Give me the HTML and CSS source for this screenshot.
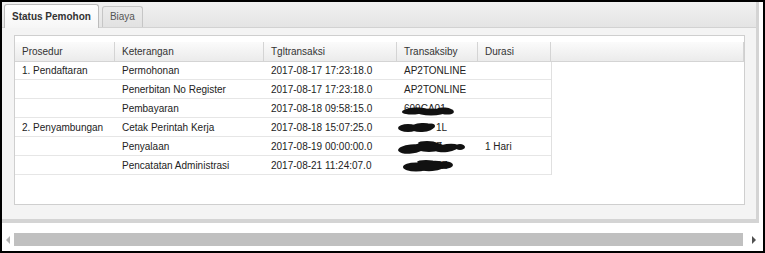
FILE: index.html
```html
<!DOCTYPE html>
<html lang="en">
<head>
    <meta charset="UTF-8">
    <title>Status Pemohon</title>
    <link rel="stylesheet" href="styles.css">
</head>
<body>
    <div class="window">
        <div class="tabpanel">
            <div class="tabstrip">
                <div class="tab active">Status Pemohon</div>
                <div class="tab">Biaya</div>
            </div>
            <div class="tabbody">
                <div class="grid">
                    <div class="grid-head">
                        <div class="hcell">Prosedur</div>
                        <div class="hcell">Keterangan</div>
                        <div class="hcell">Tgltransaksi</div>
                        <div class="hcell">Transaksiby</div>
                        <div class="hcell">Durasi</div>
                        <div class="hcell last"></div>
                    </div>
                    <div class="grid-body">
                        <div class="row">
                            <div class="cell">1. Pendaftaran</div>
                            <div class="cell">Permohonan</div>
                            <div class="cell">2017-08-17 17:23:18.0</div>
                            <div class="cell">AP2TONLINE</div>
                            <div class="cell"></div>
                        </div>
                        <div class="row">
                            <div class="cell"></div>
                            <div class="cell">Penerbitan No Register</div>
                            <div class="cell">2017-08-17 17:23:18.0</div>
                            <div class="cell">AP2TONLINE</div>
                            <div class="cell"></div>
                        </div>
                        <div class="row">
                            <div class="cell"></div>
                            <div class="cell">Pembayaran</div>
                            <div class="cell">2017-08-18 09:58:15.0</div>
                            <div class="cell redacted first">609CA01
                                <svg class="blob b1" width="54" height="12" viewBox="0 0 54 12">
                                    <g fill="#111">
                                        <ellipse cx="14" cy="7" rx="13" ry="3.5" transform="rotate(-4 14 7)"/>
                                        <ellipse cx="30" cy="8" rx="14" ry="3.5"/>
                                        <ellipse cx="44" cy="7" rx="9" ry="3.5" transform="rotate(6 44 7)"/>
                                    </g>
                                </svg>
                            </div>
                            <div class="cell"></div>
                        </div>
                        <div class="row">
                            <div class="cell">2. Penyambungan</div>
                            <div class="cell">Cetak Perintah Kerja</div>
                            <div class="cell">2017-08-18 15:07:25.0</div>
                            <div class="cell redacted">1L
                                <svg class="blob b2" width="40" height="11" viewBox="0 0 40 11">
                                    <g fill="#111">
                                        <ellipse cx="11" cy="6" rx="10" ry="4"/>
                                        <ellipse cx="25" cy="5.5" rx="12" ry="4.5" transform="rotate(-3 25 5.5)"/>
                                        <ellipse cx="34" cy="4" rx="4" ry="2.5"/>
                                    </g>
                                </svg>
                            </div>
                            <div class="cell">&nbsp;</div>
                        </div>
                        <div class="row">
                            <div class="cell"></div>
                            <div class="cell">Penyalaan</div>
                            <div class="cell">2017-08-19 00:00:00.0</div>
                            <div class="cell redacted">Z
                                <svg class="blob b3" width="70" height="15" viewBox="0 0 70 15">
                                    <g fill="#111">
                                        <ellipse cx="14" cy="9" rx="13" ry="4.5" transform="rotate(-6 14 9)"/>
                                        <ellipse cx="32" cy="7" rx="15" ry="5"/>
                                        <ellipse cx="50" cy="8" rx="12" ry="4" transform="rotate(-8 50 8)"/>
                                        <ellipse cx="63" cy="7" rx="5" ry="3"/>
                                        <ellipse cx="30" cy="3" rx="9" ry="2"/>
                                    </g>
                                </svg>
                            </div>
                            <div class="cell">1 Hari</div>
                        </div>
                        <div class="row">
                            <div class="cell"></div>
                            <div class="cell">Pencatatan Administrasi</div>
                            <div class="cell">2017-08-21 11:24:07.0</div>
                            <div class="cell redacted">4Z
                                <svg class="blob b4" width="52" height="14" viewBox="0 0 52 14">
                                    <g fill="#111">
                                        <ellipse cx="14" cy="8" rx="13" ry="4.5"/>
                                        <ellipse cx="30" cy="7" rx="14" ry="5" transform="rotate(-5 30 7)"/>
                                        <ellipse cx="44" cy="6" rx="7" ry="3.5"/>
                                        <ellipse cx="24" cy="3" rx="9" ry="2"/>
                                    </g>
                                </svg>
                            </div>
                            <div class="cell"></div>
                        </div>
                    </div>
                </div>
            </div>
        </div>
        <div class="hscroll">
            <span class="arrow left"></span>
            <div class="track"></div>
            <span class="arrow right"></span>
        </div>
    </div>
</body>
</html>
```

FILE: styles.css
```css
body {
    margin: 0;
    font-family: "Liberation Sans", Arial, sans-serif;
    font-size: 10px;
    color: #222;
    background: #fff;
}
.window {
    width: 765px;
    height: 253px;
    box-sizing: border-box;
    border: 2px solid #000;
    background: #fff;
    display: flex;
    flex-direction: column;
}
.tabpanel {
    width: 757px;
    height: 221px;
    box-sizing: border-box;
    border-right: 3px solid #d4d4d4;
    border-bottom: 4px solid #d4d4d4;
    display: flex;
    flex-direction: column;
}
.tabstrip {
    height: 26px;
    box-sizing: border-box;
    padding: 3px 0 0 2px;
    display: flex;
    align-items: flex-end;
    gap: 3px;
    background: linear-gradient(#f1f1f1, #e4e4e4);
    border-bottom: 1px solid #d2d2d2;
}
.tab {
    height: 21px;
    box-sizing: border-box;
    padding: 0 7px;
    line-height: 20px;
    border: 1px solid #c6c6c6;
    border-bottom: none;
    border-radius: 3px 3px 0 0;
    background: linear-gradient(#ececec, #e2e2e2);
    color: #555;
}
.tab.active {
    height: 24px;
    margin-bottom: -1px;
    line-height: 23px;
    border-color: #bcbcbc;
    background: linear-gradient(#ffffff, #f6f6f6);
    color: #333;
    font-weight: bold;
}
.tabbody {
    flex: 1;
    background: #f4f4f4;
    padding: 7px 11px 11px 12px;
}
.grid {
    height: 170px;
    box-sizing: border-box;
    border: 1px solid #cfcfcf;
    background: #fff;
    padding-top: 6px;
}
.grid-head {
    display: grid;
    grid-template-columns: 100px 149px 133px 81px 73px 1fr;
    height: 19px;
}
.hcell {
    box-sizing: border-box;
    padding-left: 7px;
    line-height: 19px;
    color: #333;
    background: linear-gradient(#fbfbfb, #ebebeb);
    border-right: 1px solid #d4d4d4;
    border-bottom: 1px solid #d4d4d4;
}
.grid-body {
    width: 536px;
    border-right: 1px solid #e0e0e0;
}
.row {
    display: grid;
    grid-template-columns: 100px 149px 133px 81px 73px;
    height: 19px;
    box-sizing: border-box;
    border-bottom: 1px solid #e6e6e6;
}
.cell {
    padding: 1px 0 0 7px;
    line-height: 18px;
    white-space: nowrap;
}
.redacted {
    position: relative;
    padding-left: 39px;
}
.redacted.first {
    padding-left: 7px;
}
.blob {
    position: absolute;
}
.b1 {
    left: 4px;
    top: 5px;
}
.b2 {
    left: 0;
    top: 4px;
}
.b3 {
    left: 0;
    top: 3px;
}
.b4 {
    left: 5px;
    top: 3px;
}
.hscroll {
    flex: 1;
    display: flex;
    align-items: center;
    padding: 8px 0 3px 2px;
    gap: 2px;
}
.track {
    flex: 1;
    height: 13px;
    background: #c0c0c0;
}
.arrow {
    width: 8px;
    height: 13px;
    display: flex;
    align-items: center;
    justify-content: center;
}
.arrow::before {
    content: "";
    border-top: 4px solid transparent;
    border-bottom: 4px solid transparent;
}
.arrow.left::before {
    border-right: 4px solid #b4b4b4;
}
.arrow.right {
    width: 18px;
}
.arrow.right::before {
    border-left: 4px solid #505050;
}
```
